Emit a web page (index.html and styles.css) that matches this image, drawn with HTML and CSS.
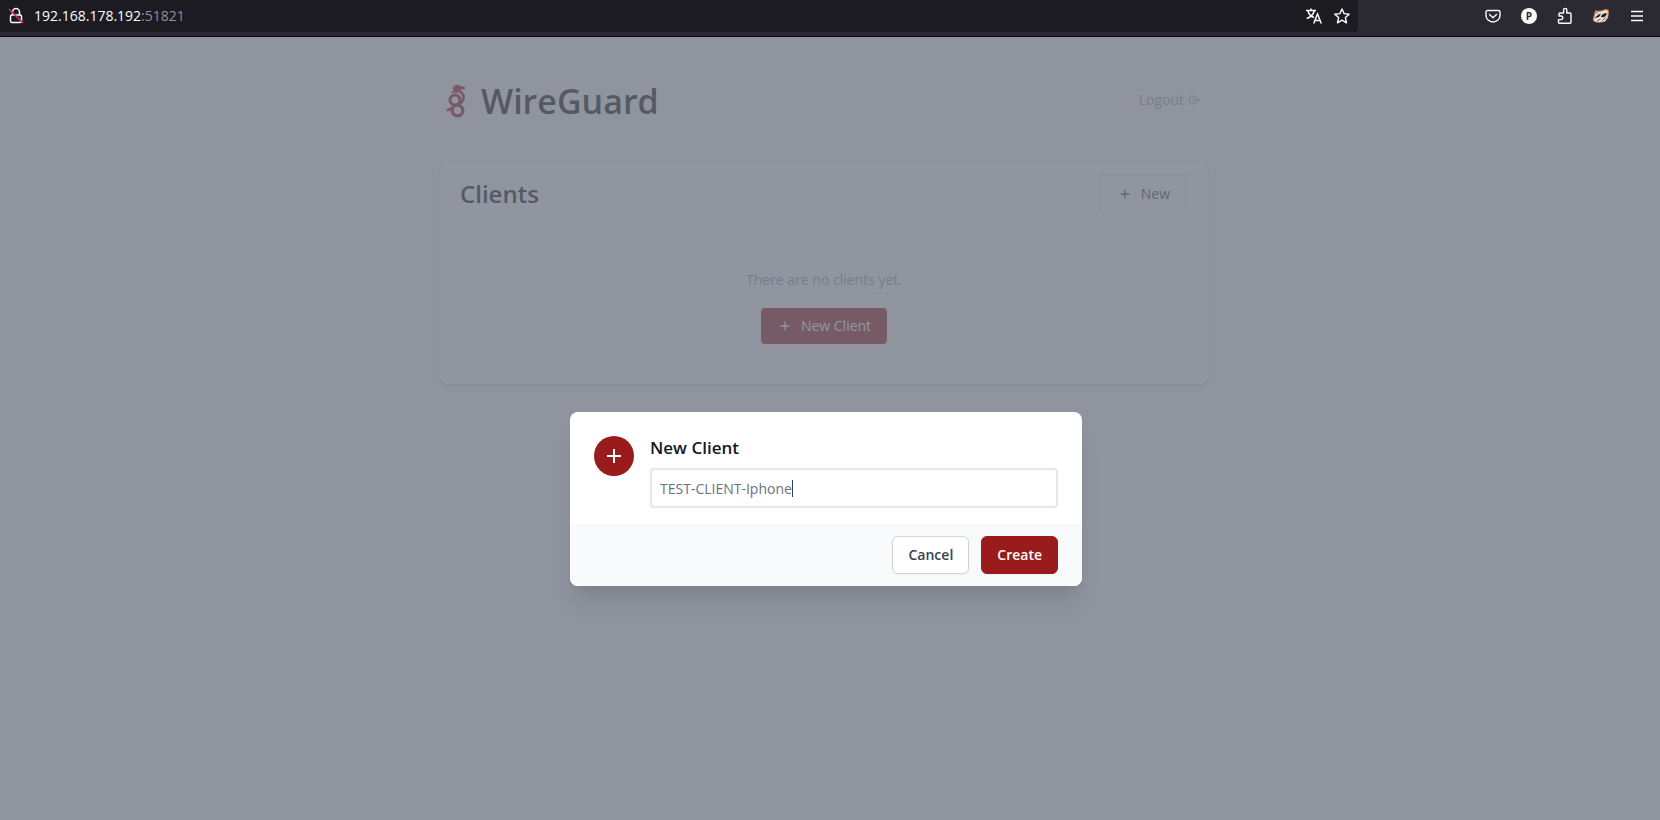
FILE: index.html
```html
<!doctype html>
<html lang="en">
<head>
    <meta charset="UTF-8">
    <meta name="viewport" content="width=device-width, initial-scale=1.0">
    <title>WireGuard</title>

    <link rel="stylesheet" href="styles.css">
</head>
<body>
<div class="toolbar">
    <div class="urlbar">
        <svg class="icon-lock" width="16" height="18" viewBox="0 0 16 18" fill="none" stroke="#fbfbfe" stroke-width="1.5">
            <path d="M4.5 8V5a3.5 3.5 0 0 1 7 0v3"/>
            <rect x="2.5" y="8" width="11" height="7.5" rx="1.5"/>
            <path d="M1 2l14 14" stroke="#e22850" stroke-width="1.6"/>
        </svg>
        <span class="url">192.168.178.192<span class="port">:51821</span></span>
        <button class="tool" aria-label="Translate page">
            <svg width="16" height="16" viewBox="0 0 16 16" fill="none" stroke="#fbfbfe" stroke-width="1.5">
                <path d="M0 2.5h10M5 .5v2M2 3c1 3.500 3 5.500 6 6.500M8.200 3C7.500 6 5 9 .7 10.500"/>
                <path d="M7.700 15.500L11.500 6l3.800 9.500M9 12.500h5"/>
            </svg>
        </button>
        <button class="tool" aria-label="Bookmark this page">
            <svg width="16" height="16" viewBox="0 0 16 16" fill="none" stroke="#fbfbfe" stroke-width="1.4" stroke-linejoin="round">
                <path d="M8 1l2.100 4.600 5.100.6-3.800 3.400 1.100 5.200L8 12.200l-4.500 2.600 1.100-5.200L.8 6.200l5.100-.6z"/>
            </svg>
        </button>
    </div>
    <div class="extensions">
        <button class="tool" aria-label="Save to Pocket">
            <svg width="16" height="16" viewBox="0 0 16 16" fill="none" stroke="#fbfbfe" stroke-width="1.4" stroke-linecap="round" stroke-linejoin="round">
                <path d="M2.500 2.500h11a1.500 1.500 0 0 1 1.500 1.500v3.500a7 6.500 0 0 1-14 0V4a1.500 1.500 0 0 1 1.500-1.500z"/>
                <path d="M4.500 6.500L8 9.700l3.500-3.200"/>
            </svg>
        </button>
        <button class="tool" aria-label="Profile"><span class="avatar">P</span></button>
        <button class="tool" aria-label="Extensions">
            <svg width="16" height="18" viewBox="0 0 16 18" fill="none" stroke="#fbfbfe" stroke-width="1.4" stroke-linejoin="round">
                <path d="M2.500 16.300h10.500a1 1 0 0 0 1-1V7a1 1 0 0 0-1-1H9.800V3a1.600 1.600 0 0 0-3.200 0v3H3a1 1 0 0 0-1 1v2h2a1.700 1.700 0 0 1 0 3.600H1.500v2.700a1 1 0 0 0 1 1z"/>
            </svg>
        </button>
        <button class="tool" aria-label="Privacy Badger">
            <svg width="16" height="14" viewBox="0 0 16 14">
                <path d="M0 9L1 6.500 2 1.500l3 .3L8 1.500 12.500 0 15.500.8l.5 3-1 5.200-3 4-6 .8-3.500-.6L0 12z" fill="#d98b52"/>
                <path d="M1 11L2 7l1-4.500 2 1L9 2.500l4-1.300 1.800.8-.5 6.500L11.500 12 6 13l-3.500-.5z" fill="#e8e4e2"/>
                <path d="M1.500 9.500c2-2.500 4-4.500 6.500-5l-2 3.500-2 .5zM8 7c1.500-2 3.500-3 6-3l-1.500 3.500-4 1z" fill="#1c1b22"/>
                <path d="M4 12l3.500-2M3 3.500l1.500 1M9.500 11.500l3-3" stroke="#55505a"/>
            </svg>
        </button>
        <button class="tool" aria-label="Open application menu">
            <svg width="14" height="14" viewBox="0 0 14 14" stroke="#fbfbfe" stroke-width="1.300">
                <path d="M1 2.500h12M1 7h12M1 11.500h12"/>
            </svg>
        </button>
    </div>
</div>

<div class="viewport">
    <main class="container">
        <header class="page-header">
            <h1>
                <svg class="logo" width="20" height="34" viewBox="0 0 20 34" fill="none" stroke="#991b1b">
                    <circle cx="9" cy="16" r="5" stroke-width="3"/>
                    <circle cx="11.500" cy="26.500" r="5.300" stroke-width="3.200"/>
                    <path d="M11 6c5 2 7.500 5 6.300 9.500-1 3.500-4.800 5-7.300 6.500M6.500 24L1 26.500" stroke-width="2.600"/>
                    <path d="M6 3.500l3.500-.8L7.500 1.500 12 .8l3 1.500 3.500.5 1 2-2 .8-3-.2 1.500 2.600-3-.5-2 1.500-2-.6L5 9l2.500-3z" fill="#991b1b" stroke="none"/>
                </svg>
                <span>WireGuard</span>
            </h1>
            <a class="logout" href="#logout">
                Logout
                <svg width="12" height="12" viewBox="0 0 24 24" fill="none" stroke="currentColor" stroke-width="2" stroke-linecap="round" stroke-linejoin="round">
                    <path d="M17 16l4-4m0 0l-4-4m4 4H7m6 4v1a3 3 0 0 1-3 3H6a3 3 0 0 1-3-3V7a3 3 0 0 1 3-3h4a3 3 0 0 1 3 3v1"/>
                </svg>
            </a>
        </header>

        <section class="card">
            <div class="card-header">
                <h2>Clients</h2>
                <button class="btn-new">
                    <svg class="plus" viewBox="0 0 24 24"><path d="M12 6v12M6 12h12"/></svg>
                    New
                </button>
            </div>
            <div class="card-empty">
                <p>There are no clients yet.</p>
                <button class="btn-new-client">
                    <svg class="plus" viewBox="0 0 24 24"><path d="M12 6v12M6 12h12"/></svg>
                    New Client
                </button>
            </div>
        </section>
    </main>

    <div class="overlay">
        <form class="modal" role="dialog" aria-labelledby="modal-title">
            <div class="modal-body">
                <div class="modal-icon">
                    <svg width="24" height="24" viewBox="0 0 24 24"><path d="M12 5v14M5 12h14"/></svg>
                </div>
                <div class="modal-content">
                    <h3 id="modal-title">New Client</h3>
                    <div class="field">
                        <input type="text" aria-label="Name" placeholder="Name" value="TEST-CLIENT-Iphone" spellcheck="false">
                        <span class="caret"></span>
                    </div>
                </div>
            </div>
            <div class="modal-footer">
                <button type="button" class="btn-cancel">Cancel</button>
                <button type="button" class="btn-create">Create</button>
            </div>
        </form>
    </div>
</div>
</body>
</html>
```

FILE: styles.css
```css
* {
    box-sizing: border-box;
}

body {
    margin: 0;
    min-height: 100vh;
    display: flex;
    flex-direction: column;
    font-family: "Open Sans", "Noto Sans", sans-serif;
    font-size: 14px;
    line-height: 20px;
    color: #111;
    background-color: #f9fafb;
}

h1, h2, h3, p {
    margin: 0;
    font-weight: 600;
}

button, input {
    font: inherit;
}

button {
    padding: 0;
    border: none;
    background: none;
    cursor: pointer;
}

svg {
    display: block;
}

/* browser toolbar */
.toolbar {
    display: flex;
    height: 37px;
    padding-bottom: 4px;
    background-color: #2b2a33;
    border-bottom: 1px solid #0c0c0d;
}

.urlbar {
    flex: 1;
    display: flex;
    align-items: center;
    gap: 12px;
    padding: 0 8px;
    background-color: #1c1b22;
    border-radius: 0 0 4px 0;
}

.icon-lock {
    margin-right: -2px;
}

.url {
    flex: 1;
    color: #fbfbfe;
}

.port {
    color: #8f8f9d;
}

.extensions {
    width: 302px;
    display: flex;
    align-items: center;
    justify-content: flex-end;
    gap: 20px;
    padding-right: 15px;
}

.tool {
    width: 16px;
    display: flex;
    justify-content: center;
}

.avatar {
    flex: none;
    width: 16px;
    height: 16px;
    border-radius: 50%;
    background-color: #fbfbfe;
    color: #2b2a33;
    font-size: 10px;
    font-weight: 700;
    line-height: 16px;
}

/* page */
.viewport {
    position: relative;
    flex: 1;
    padding-right: 12px;
}

.container {
    max-width: 768px;
    margin: 0 auto;
    padding-top: 40px;
}

.page-header {
    display: flex;
    justify-content: space-between;
    margin-bottom: 37px;
}

h1 {
    display: flex;
    align-items: center;
    gap: 15px;
    padding-left: 6px;
    font-size: 34px;
    line-height: 48px;
}

.logout {
    display: flex;
    align-items: center;
    gap: 4px;
    height: 20px;
    margin-top: 13px;
    padding-right: 8px;
    color: #9ca3af;
    text-decoration: none;
}

.card {
    background-color: #fff;
    border-radius: 8px;
    box-shadow: 0 4px 6px -1px rgba(0, 0, 0, 0.1), 0 2px 4px -1px rgba(0, 0, 0, 0.06);
}

.card-header {
    display: flex;
    align-items: center;
    justify-content: space-between;
    padding: 12px 20px;
    border-bottom: 2px solid #f3f4f6;
}

h2 {
    font-size: 24px;
    line-height: 32px;
}

.plus {
    width: 16px;
    height: 16px;
    fill: none;
    stroke: currentColor;
    stroke-width: 2;
    stroke-linecap: round;
}

.btn-new,
.btn-new-client {
    display: flex;
    align-items: center;
    gap: 8px;
    padding: 8px 16px;
    border-radius: 4px;
}

.btn-new {
    color: #374151;
    border: 2px solid #f3f4f6;
}

.btn-new-client {
    color: #fff;
    background-color: #991b1b;
}

.card-empty {
    display: flex;
    flex-direction: column;
    align-items: center;
    gap: 18px;
    padding: 42px 40px 40px;
}

.card-empty p {
    color: #9ca3af;
    font-weight: 400;
}

/* modal */
.overlay {
    position: absolute;
    inset: 0;
    display: flex;
    align-items: flex-start;
    justify-content: center;
    padding: 375px 8px 0 0;
    background-color: rgba(107, 114, 128, 0.75);
}

.modal {
    width: 512px;
    border-radius: 8px;
    overflow: hidden;
    background-color: #fff;
    box-shadow: 0 20px 25px -5px rgba(0, 0, 0, 0.1), 0 10px 10px -5px rgba(0, 0, 0, 0.04);
}

.modal-body {
    display: flex;
    gap: 16px;
    padding: 24px 24px 16px;
}

.modal-icon {
    flex: none;
    width: 40px;
    height: 40px;
    display: flex;
    align-items: center;
    justify-content: center;
    border-radius: 50%;
    background-color: #991b1b;
}

.modal-icon svg {
    fill: none;
    stroke: #fff;
    stroke-width: 2;
}

.modal-content {
    flex: 1;
}

h3 {
    margin-bottom: 8px;
    font-size: 17px;
    line-height: 24px;
    color: #111827;
}

.field {
    position: relative;
}

.field input {
    display: block;
    width: 100%;
    height: 40px;
    padding: 8px;
    border: 2px solid #e5e7eb;
    border-radius: 4px;
    outline: none;
    color: #6b7280;
    background-color: #fff;
}

.caret {
    position: absolute;
    left: 142px;
    top: 12px;
    width: 1px;
    height: 17px;
    background-color: #374151;
}

.modal-footer {
    display: flex;
    justify-content: flex-end;
    gap: 12px;
    padding: 12px 24px;
    background-color: #f9fafb;
}

.btn-cancel,
.btn-create {
    height: 38px;
    padding: 0 15px;
    border: 1px solid #d1d5db;
    border-radius: 6px;
    font-weight: 600;
    color: #374151;
    background-color: #fff;
    box-shadow: 0 1px 2px rgba(0, 0, 0, 0.05);
}

.btn-create {
    color: #fff;
    border-color: #991b1b;
    background-color: #991b1b;
}
```
